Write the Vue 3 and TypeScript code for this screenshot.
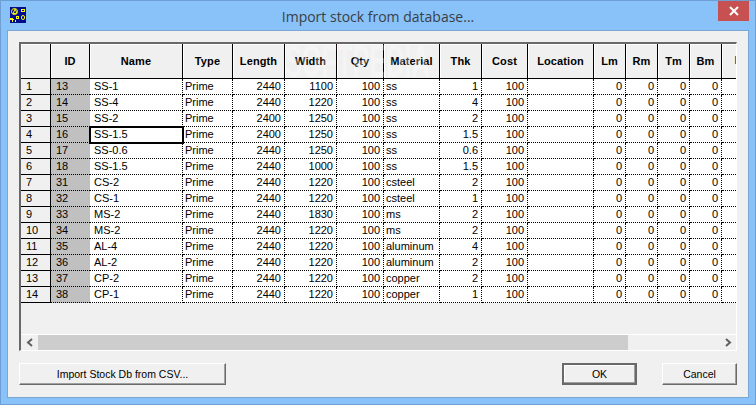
<script setup lang="ts">
interface Stock {
  id: number;
  name: string;
  length: number;
  width: number;
  material: string;
  thk: string;
}

const columns = [
  { label: "", width: 30 },
  { label: "ID", width: 39 },
  { label: "Name", width: 93 },
  { label: "Type", width: 50 },
  { label: "Length", width: 52 },
  { label: "Width", width: 52 },
  { label: "Qty", width: 47 },
  { label: "Material", width: 56 },
  { label: "Thk", width: 42 },
  { label: "Cost", width: 46 },
  { label: "Location", width: 66 },
  { label: "Lm", width: 32 },
  { label: "Rm", width: 32 },
  { label: "Tm", width: 32 },
  { label: "Bm", width: 32 },
];

const stocks: Stock[] = [
  { id: 13, name: "SS-1", length: 2440, width: 1100, material: "ss", thk: "1" },
  { id: 14, name: "SS-4", length: 2440, width: 1220, material: "ss", thk: "4" },
  { id: 15, name: "SS-2", length: 2400, width: 1250, material: "ss", thk: "2" },
  { id: 16, name: "SS-1.5", length: 2400, width: 1250, material: "ss", thk: "1.5" },
  { id: 17, name: "SS-0.6", length: 2440, width: 1250, material: "ss", thk: "0.6" },
  { id: 18, name: "SS-1.5", length: 2440, width: 1000, material: "ss", thk: "1.5" },
  { id: 31, name: "CS-2", length: 2440, width: 1220, material: "csteel", thk: "2" },
  { id: 32, name: "CS-1", length: 2440, width: 1220, material: "csteel", thk: "1" },
  { id: 33, name: "MS-2", length: 2440, width: 1830, material: "ms", thk: "2" },
  { id: 34, name: "MS-2", length: 2440, width: 1220, material: "ms", thk: "2" },
  { id: 35, name: "AL-4", length: 2440, width: 1220, material: "aluminum", thk: "4" },
  { id: 36, name: "AL-2", length: 2440, width: 1220, material: "aluminum", thk: "2" },
  { id: 37, name: "CP-2", length: 2440, width: 1220, material: "copper", thk: "2" },
  { id: 38, name: "CP-1", length: 2440, width: 1220, material: "copper", thk: "1" },
];

const w = (i: number) => ({ width: columns[i].width + "px" });
</script>

<template>
  <div class="window">
    <div class="titlebar">
      <svg class="app-icon" width="16" height="16" viewBox="0 0 16 16">
        <rect width="16" height="16" fill="#000c8c" />
        <g fill="none" stroke="#ffff00">
          <circle cx="4.5" cy="4.5" r="3" />
          <path d="M3 7l2-5 2 4z" />
          <rect x="11.5" y="2.5" width="3" height="2" />
          <rect x="11.5" y="8.5" width="3" height="4" rx="1.5" />
          <rect x="6.5" y="9.5" width="2" height="2" />
        </g>
        <path d="M0 11h3v1h1v1H3v2H2v-2H0zM5 13h1v2H5z" fill="#ffff00" />
      </svg>
      <div class="title">Import stock from database...</div>
      <div class="close">
        <svg width="10" height="10" viewBox="0 0 10 10">
          <path d="M1 1l8 8M9 1l-8 8" stroke="#fff" stroke-width="2" />
        </svg>
      </div>
    </div>
    <div class="client">
      <div class="grid">
        <div class="sheet">
          <div class="head">
            <div v-for="c in columns" :key="c.label" class="hcell" :style="{ width: c.width + 'px' }">
              {{ c.label }}
            </div>
            <div class="hcell tail"><span class="cut">I</span></div>
          </div>
          <div v-for="(s, i) in stocks" :key="s.id" class="row">
            <div class="cell rownum" :style="w(0)">{{ i + 1 }}</div>
            <div class="cell idcell" :style="w(1)">{{ s.id }}</div>
            <div class="cell namecell" :class="{ focused: i === 3 }" :style="w(2)">{{ s.name }}</div>
            <div class="cell left" :style="w(3)">Prime</div>
            <div class="cell num" :style="w(4)">{{ s.length }}</div>
            <div class="cell num" :style="w(5)">{{ s.width }}</div>
            <div class="cell num" :style="w(6)">100</div>
            <div class="cell left" :style="w(7)">{{ s.material }}</div>
            <div class="cell num" :style="w(8)">{{ s.thk }}</div>
            <div class="cell num" :style="w(9)">100</div>
            <div class="cell" :style="w(10)"></div>
            <div class="cell num" :style="w(11)">0</div>
            <div class="cell num" :style="w(12)">0</div>
            <div class="cell num" :style="w(13)">0</div>
            <div class="cell num" :style="w(14)">0</div>
            <div class="cell tail"></div>
          </div>
        </div>
        <div class="scrollbar">
          <div class="arrow">
            <svg width="8" height="9" viewBox="0 0 8 9">
              <path d="M6 1L2 4.5 6 8" fill="none" stroke="#606060" stroke-width="2" />
            </svg>
          </div>
          <div class="thumb"></div>
          <div class="track"></div>
          <div class="arrow">
            <svg width="8" height="9" viewBox="0 0 8 9">
              <path d="M2 1l4 3.5L2 8" fill="none" stroke="#606060" stroke-width="2" />
            </svg>
          </div>
        </div>
        <div class="watermark">SOFTPEDIA</div>
      </div>
      <div class="actions">
        <button class="btn import">Import Stock Db from CSV...</button>
        <div class="spacer"></div>
        <button class="btn default">OK</button>
        <button class="btn">Cancel</button>
      </div>
    </div>
  </div>
</template>

<style>
html,
body {
  margin: 0;
  background: #88c2f9;
}
</style>

<style scoped>
.window {
  width: 756px;
  height: 405px;
  box-sizing: border-box;
  border: 1px solid #6d9fd4;
  background: #88c2f9;
  display: flex;
  flex-direction: column;
  font-family: "Liberation Sans", Arial, sans-serif;
  overflow: hidden;
}

.titlebar {
  position: relative;
  height: 29px;
  flex: none;
  display: flex;
  align-items: center;
  justify-content: center;
}

.app-icon {
  position: absolute;
  left: 9px;
  top: 6px;
}

.title {
  font-family: "Open Sans", sans-serif;
  font-size: 14px;
  color: #3a3f45;
  padding-top: 1px;
}

.close {
  position: absolute;
  right: 6px;
  top: 0;
  width: 31px;
  height: 20px;
  background: #c75050;
  display: flex;
  align-items: center;
  justify-content: center;
}

.client {
  flex: 1;
  margin: 0 6px 6px;
  background: #f0f0f0;
  border: 1px solid #7ba7d4;
  padding: 11px 11px 12px;
  display: flex;
  flex-direction: column;
}

.grid {
  position: relative;
  height: 309px;
  box-sizing: border-box;
  border-top: 2px solid #696969;
  border-left: 2px solid #696969;
  border-right: 1px solid #fff;
  border-bottom: 1px solid #fff;
  display: flex;
  flex-direction: column;
  overflow: hidden;
}

.sheet {
  flex: 1;
  overflow: hidden;
}

.head,
.row {
  display: flex;
  width: 715px;
}

.hcell {
  height: 35px;
  flex: none;
  box-sizing: border-box;
  border-right: 1px solid #000;
  border-bottom: 1px solid #000;
  background: #f0f0f0;
  box-shadow: inset 1px 1px 0 #fff;
  display: flex;
  align-items: center;
  justify-content: center;
  font-size: 11px;
  font-weight: bold;
  letter-spacing: 0.1px;
  color: #000;
}

.hcell.tail {
  flex: 1;
  border-right: none;
  padding-bottom: 2px;
}

.cut {
  color: #333;
  margin-right: -14px;
}

.row {
  height: 16px;
}

.cell {
  flex: none;
  box-sizing: border-box;
  height: 16px;
  line-height: 15px;
  font-size: 11px;
  color: #000;
  background: #fff;
  border-right: 1px dotted #000;
  border-bottom: 1px dotted #000;
  white-space: nowrap;
  overflow: hidden;
}

.cell.tail {
  flex: 1;
  border-right: none;
}

.rownum {
  background: #f0f0f0;
  border-right: 1px solid #000;
  border-bottom: 1px solid #000;
  padding-left: 5px;
}

.idcell {
  background: #c0c0c0;
  border-right: none;
  padding-left: 5px;
}

.namecell {
  padding-left: 4px;
}

.focused {
  border: none;
  outline: 2px solid #000;
  outline-offset: -1px;
  position: relative;
}

.left {
  padding-left: 2px;
}

.num {
  text-align: right;
  padding-right: 3px;
}

.scrollbar {
  flex: none;
  height: 15px;
  display: flex;
  border-top: 1px solid #fff;
  background: #f0f0f0;
}

.arrow {
  width: 17px;
  flex: none;
  display: flex;
  align-items: center;
  justify-content: center;
}

.thumb {
  width: 590px;
  flex: none;
  background: #cdcdcd;
}

.track {
  flex: 1;
}

.watermark {
  position: absolute;
  left: 264px;
  top: -6px;
  font-size: 46px;
  line-height: 46px;
  font-weight: bold;
  color: #fff;
  opacity: 0.3;
  pointer-events: none;
  transform: scaleX(0.55);
  transform-origin: left top;
}

.actions {
  display: flex;
  margin-top: 12px;
  height: 22px;
}

.spacer {
  flex: 1;
}

.btn {
  width: 75px;
  height: 22px;
  box-sizing: border-box;
  padding: 0;
  margin-left: 25px;
  background: #f0f0f0;
  border: 1px solid;
  border-color: #fff #696969 #696969 #fff;
  box-shadow: inset -1px -1px 0 #a0a0a0;
  font-family: "Liberation Sans", Arial, sans-serif;
  font-size: 10.5px;
  color: #000;
}

.btn.import {
  width: 207px;
  margin-left: 0;
}

.btn.default {
  border: 2px solid;
  border-color: #696969;
  box-shadow: inset -1px -1px 0 #a0a0a0, inset 1px 1px 0 #fff;
}
</style>
